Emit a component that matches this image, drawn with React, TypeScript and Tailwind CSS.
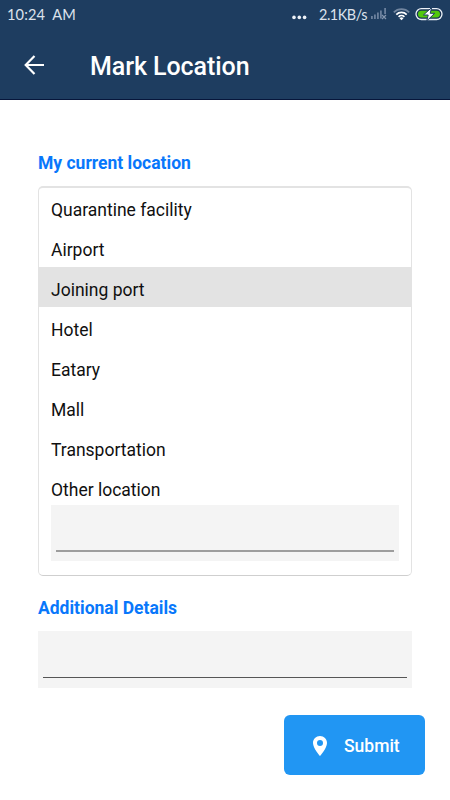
import { useState } from 'react';

const places = [
  'Quarantine facility',
  'Airport',
  'Joining port',
  'Hotel',
  'Eatary',
  'Mall',
  'Transportation',
];

function StatusBar() {
  return (
    <div className="flex h-[30px] items-center justify-between pl-[7px] pr-[7px] font-['Lato',sans-serif] text-[#dce2ec]">
      <span className="whitespace-pre text-[14.6px] leading-[30px] tracking-[0.1px]">10:24  AM</span>
      <div className="flex h-[30px] items-center">
        <svg className="mr-[12px]" width="15" height="30" fill="#eef2f8">
          <circle cx="2" cy="17.4" r="1.8" />
          <circle cx="7.3" cy="17.4" r="1.8" />
          <circle cx="12.6" cy="17.4" r="1.8" />
        </svg>
        <span className="w-[52px] whitespace-nowrap text-[14.4px] leading-[30px] tracking-[-0.45px]">2.1KB/s</span>
        {/* signal */}
        <svg width="16" height="30" fill="#6b809d">
          <rect x="0" y="16" width="1.8" height="3" />
          <rect x="3" y="14.5" width="1.8" height="4.5" />
          <rect x="6" y="12.5" width="1.8" height="6.5" />
          <rect x="9" y="10.5" width="1.8" height="8" />
          <rect x="13.2" y="8" width="1.8" height="6" />
          <path d="M11 15l4 4M15 15l-4 4" stroke="#8495ae" strokeWidth="1.2" />
        </svg>
        {/* wifi */}
        <svg className="ml-[6px]" width="17" height="30" fill="none" strokeWidth="1.8">
          <path d="M.8 12.3a11 11 0 0 1 15.4 0" stroke="#71859f" />
          <path d="M3.3 14.6a7.4 7.4 0 0 1 10.4 0" stroke="#fff" />
          <path d="M5.6 16.8a4.2 4.2 0 0 1 5.8 0" stroke="#fff" />
          <path d="M6.5 18.2a3 3 0 0 1 4 0l-2 2z" fill="#fff" />
        </svg>
        {/* battery */}
        <svg className="ml-[5px]" width="28" height="30">
          <rect x="1" y="8.7" width="26" height="10.8" rx="5.4" fill="#183354" stroke="#edf2f8" strokeWidth="1.3" />
          <rect x="3" y="10.7" width="22" height="6.8" rx="3.4" fill="#51c80c" />
          <path d="M16.7 7.5L8.4 15h4.8l-1.5 6 8-7.7h-4.5z" fill="#fff" stroke="#1f3d60" strokeWidth="1" />
        </svg>
      </div>
    </div>
  );
}

function Header() {
  return (
    <header className="h-[100px] border-b border-[#07163b] bg-[#1e3d60]">
      <StatusBar />
      <div className="flex h-[69px] items-center pl-[24px]">
        <button type="button" aria-label="Back">
          <svg width="21" height="20" fill="none" stroke="#fff" strokeWidth="2.2">
            <path d="M20 10H2M10.5 1L1.7 10l8.8 9" />
          </svg>
        </button>
        <h1 className="ml-[45px] pt-[4px] text-[25px] font-medium leading-[30px] tracking-[-0.07px] text-white">Mark Location</h1>
      </div>
    </header>
  );
}

function App() {
  const [selected, setSelected] = useState('Joining port');

  return (
    <div className="h-[800px] w-[450px] overflow-hidden bg-white font-['Roboto',sans-serif]">
      <Header />
      <main className="pl-[38px] pr-[38px] pt-[51px]">
        <h2 className="text-[17.5px] font-bold leading-6 text-[#0877fb]">My current location</h2>

        <div className="mt-[11px] h-[390px] w-[374px] rounded-[5px] border border-t-2 border-[#e3e3e3] border-b-[#cfcfcf]">
          <ul className="-mt-px">
            {places.map((place) => (
              <li
                key={place}
                onClick={() => setSelected(place)}
                className={`flex h-10 items-center pl-[12px] pt-[5px] text-[17.5px] leading-6 text-[#101010] ${
                  selected === place ? 'bg-[#e3e3e3]' : ''
                }`}
              >
                {place}
              </li>
            ))}
          </ul>
          <label className="block h-[38px] pl-[12px] pt-[11px] text-[17.5px] leading-6 text-[#101010]">Other location</label>
          <div className="ml-[12px] h-[56px] w-[348px] bg-[#f4f4f4] px-[5px]">
            <input aria-label="Other location" className="block h-[47px] w-full border-b-2 border-[#9d9d9d] outline-none" />
          </div>
        </div>

        <h2 className="mt-[20px] text-[17.5px] font-bold leading-6 text-[#0877fb]">Additional Details</h2>
        <div className="mt-[11px] h-[57px] w-[374px] bg-[#f4f4f4] px-[5px]">
          <input aria-label="Additional Details" className="block h-[47px] w-full border-b border-[#555] outline-none" />
        </div>
      </main>

      <div className="flex justify-end pr-[25px] pt-[27px]">
        <button type="button" className="flex h-[60px] w-[141px] items-center rounded-[6px] bg-[#2196f3] pl-[29px] text-white">
          <svg className="mt-px" width="14" height="20" viewBox="5 2 14 20" fill="#fff">
            <path d="M12 2C8.13 2 5 5.13 5 9c0 5.25 7 13 7 13s7-7.75 7-13c0-3.87-3.13-7-7-7zm0 10a3 3 0 1 1 0-6 3 3 0 0 1 0 6z" />
          </svg>
          <span className="ml-[17px] pt-[3px] text-[17.5px] font-medium">Submit</span>
        </button>
      </div>
    </div>
  );
}

export default App;
